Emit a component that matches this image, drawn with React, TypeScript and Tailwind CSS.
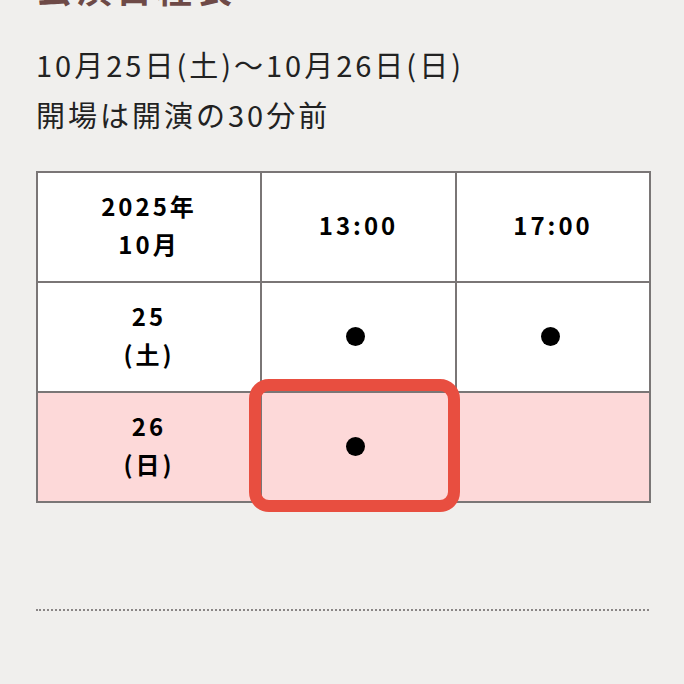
import React from "react";

const Dot = () => <div className="w-[19px] h-[19px] rounded-full bg-black ml-[84px]" />;

export default function App() {
  const font = { fontFamily: '"Noto Sans CJK JP", "Noto Sans", sans-serif' };
  return (
    <div className="w-[684px] h-[684px] overflow-hidden bg-[#f0efed]" style={font}>
      <div className="px-[36px]">
        <div className="mt-[-31px] h-[36px] text-[36px] leading-[36px] font-bold tracking-[4px] text-[#6e4a47] whitespace-nowrap">
          公演日程表
        </div>
        <div className="mt-[34px] text-[29px] leading-[50px] tracking-[3px] text-[#222] whitespace-nowrap">
          <div>10月25日(土)〜10月26日(日)</div>
          <div>開場は開演の30分前</div>
        </div>
        <div className="relative mt-[32px] w-[613px]">
          <table className="w-[613px] border-collapse border-2 border-[#7a7676] table-fixed text-black font-bold text-[24px] leading-[38px] tracking-[3px]">
            <colgroup>
              <col className="w-[224px]" />
              <col className="w-[195px]" />
              <col className="w-[194px]" />
            </colgroup>
            <tbody>
              <tr className="h-[110px] bg-white">
                <td className="border-2 border-[#7a7676] text-center align-middle pb-[5px]">
                  <div>2025年</div>
                  <div>10月</div>
                </td>
                <td className="border-2 border-[#7a7676] text-center align-middle pb-[5px]">13:00</td>
                <td className="border-2 border-[#7a7676] text-center align-middle pb-[5px]">17:00</td>
              </tr>
              <tr className="h-[110px] bg-white">
                <td className="border-2 border-[#7a7676] text-center align-middle pb-[4px]">
                  <div>25</div>
                  <div>(土)</div>
                </td>
                <td className="border-2 border-[#7a7676] align-middle pb-[2px]"><Dot /></td>
                <td className="border-2 border-[#7a7676] align-middle pb-[2px]"><Dot /></td>
              </tr>
              <tr className="h-[110px] bg-[#fdd9d9]">
                <td className="border-2 border-[#7a7676] text-center align-middle pb-[4px]">
                  <div>26</div>
                  <div>(日)</div>
                </td>
                <td className="border-2 border-[#7a7676] align-middle pb-[2px]"><Dot /></td>
                <td className="border-2 border-[#7a7676] align-middle"></td>
              </tr>
            </tbody>
          </table>
          <div className="absolute left-[213px] top-[208px] w-[211px] h-[133px] rounded-[20px] border-[12px] border-[#e84e40] pointer-events-none" />
        </div>
        <div className="mt-[106px] w-[613px] border-t-2 border-dotted border-[#8a8686]" />
      </div>
    </div>
  );
}
